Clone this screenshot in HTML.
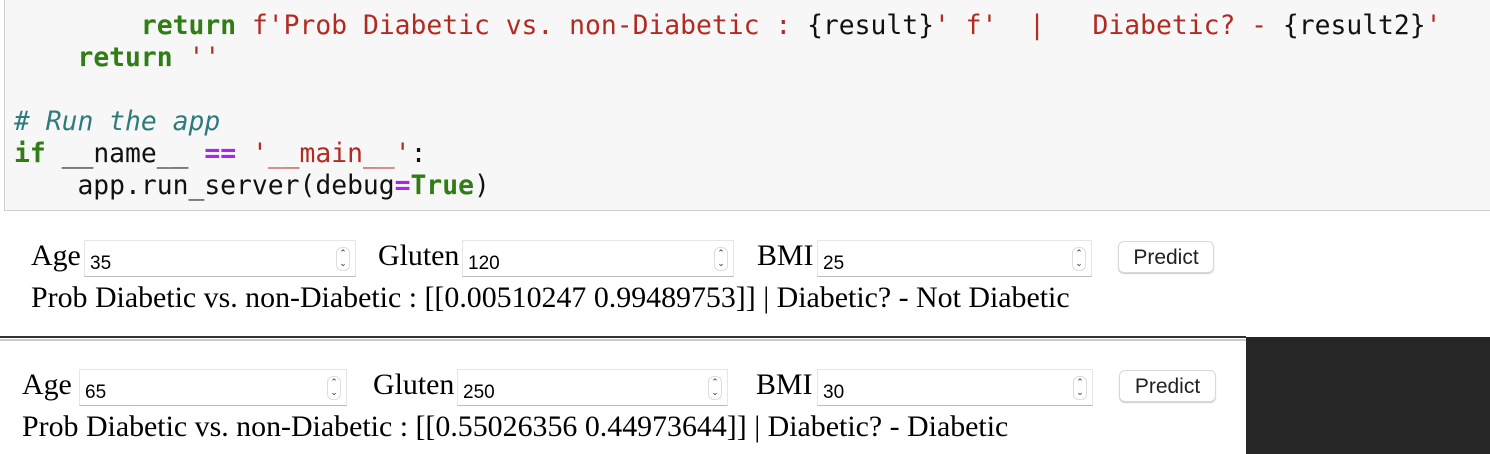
<!DOCTYPE html>
<html><head><style>
body{margin:0;width:1490px;height:454px;position:relative;overflow:hidden;background:#fff;font-family:"Liberation Serif",serif}
.code{position:absolute;left:4px;top:-2px;width:1490px;height:213px;background:#f7f7f7;border:1px solid #cfcfcf;border-top:none;box-sizing:border-box}
.ln{position:absolute;left:9px;font-family:"DejaVu Sans Mono","Liberation Mono",monospace;font-size:26.35px;white-space:pre;color:#111;line-height:32px}
.k{color:#2f7d14;font-weight:bold}.s{color:#b22b22}.c{color:#2f7b7b;font-style:italic}.o{color:#a726f0;font-weight:bold}
.t{position:absolute;font-size:29.9px;color:#000;white-space:pre;line-height:32px}
.in{position:absolute;height:37px;border:1px solid #e6e6e6;border-bottom:1px solid #bbb;box-sizing:border-box;font-family:"Liberation Sans",sans-serif;font-size:19px;padding:12px 0 0 5px;background:#fff}
.sp{position:absolute;right:5px;top:6px;width:12px;height:22px;border-radius:6px;border:1px solid #ddd;font-size:9px;line-height:10px;text-align:center;color:#333}
.btn{position:absolute;height:32px;border:1px solid #d8d8d8;border-radius:6px;box-shadow:0 1px 1px #ccc;font-family:"Liberation Sans",sans-serif;font-size:21px;text-align:center;line-height:32px;box-sizing:border-box;background:#fff;color:#222}
</style></head><body>
<div class="code">
<div class="ln" style="top:12px"><span>        </span><span class="k">return</span> <span class="s">f'Prob Diabetic vs. non-Diabetic : </span>{result}<span class="s">' f'  |   Diabetic? - </span>{result2}<span class="s">'</span></div>
<div class="ln" style="top:44px">    <span class="k">return</span> <span class="s">''</span></div>
<div class="ln" style="top:108px"><span class="c"># Run the app</span></div>
<div class="ln" style="top:140px"><span class="k">if</span> __name__ <span class="o">==</span> <span class="s">'__main__'</span>:</div>
<div class="ln" style="top:172px">    app.run_server(debug<span class="o">=</span><span class="k">True</span>)</div>
</div>

<div class="t" style="left:31px;top:240px">Age</div>
<div class="in" style="left:84px;top:240px;width:272px">35<div class="sp">⌃<br>⌄</div></div>
<div class="t" style="left:378px;top:240px">Gluten</div>
<div class="in" style="left:462px;top:240px;width:272px">120<div class="sp">⌃<br>⌄</div></div>
<div class="t" style="left:757px;top:240px">BMI</div>
<div class="in" style="left:817px;top:240px;width:275px">25<div class="sp">⌃<br>⌄</div></div>
<div class="btn" style="left:1118px;top:241px;width:96px">Predict</div>
<div class="t" style="left:31px;top:282px">Prob Diabetic vs. non-Diabetic : [[0.00510247 0.99489753]] | Diabetic? - Not Diabetic</div>

<div style="position:absolute;left:0;top:336px;width:1246px;height:2px;background:#333"></div>
<div style="position:absolute;left:0;top:339px;width:1246px;height:2px;background:#ccc"></div>
<div style="position:absolute;left:1246px;top:337px;width:244px;height:117px;background:#262626"></div>
<div style="position:absolute;left:1246px;top:420px;width:3px;height:34px;background:#262626"></div>

<div class="t" style="left:22px;top:369px">Age</div>
<div class="in" style="left:79px;top:369px;width:268px">65<div class="sp">⌃<br>⌄</div></div>
<div class="t" style="left:373px;top:369px">Gluten</div>
<div class="in" style="left:457px;top:369px;width:271px">250<div class="sp">⌃<br>⌄</div></div>
<div class="t" style="left:756px;top:369px">BMI</div>
<div class="in" style="left:817px;top:369px;width:276px">30<div class="sp">⌃<br>⌄</div></div>
<div class="btn" style="left:1119px;top:370px;width:97px">Predict</div>
<div class="t" style="left:22px;top:411px">Prob Diabetic vs. non-Diabetic : [[0.55026356 0.44973644]] | Diabetic? - Diabetic</div>
</body></html>
